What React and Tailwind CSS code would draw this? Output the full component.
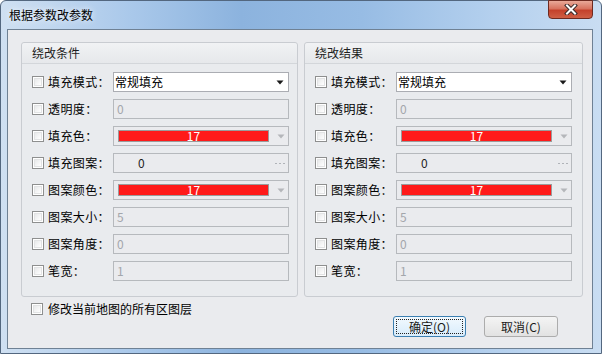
import React from 'react';

const rows = [
    { label: '填充模式：', kind: 'select' },
    { label: '透明度：', kind: 'text', value: '0' },
    { label: '填充色：', kind: 'color' },
    { label: '填充图案：', kind: 'pattern' },
    { label: '图案颜色：', kind: 'color' },
    { label: '图案大小：', kind: 'text', value: '5' },
    { label: '图案角度：', kind: 'text', value: '0' },
    { label: '笔宽：', kind: 'text', value: '1' },
];

const Checkbox = () => (
    <div className="w-[12px] h-[12px] shrink-0 border border-[#8e8f8f] bg-white p-px">
        <div className="w-full h-full border border-[#e2e3e4] bg-gradient-to-br from-[#e8e9ea] to-white" />
    </div>
);

const Arrow = ({ color }) => (
    <svg width="8" height="5" viewBox="0 0 8 5" className="shrink-0">
        <path d="M0.5 0.5 H7.5 L4 4.5 Z" fill={color} />
    </svg>
);

const Field = ({ row }) => {
    if (row.kind === 'select') {
        return (
            <div className="w-[176px] h-[20px] border border-[#abadb3] bg-white flex items-center pl-[1px] pr-[4px] justify-between">
                <span className="text-[12px] leading-none text-black">常规填充</span>
                <Arrow color="#1a1a1a" />
            </div>
        );
    }
    if (row.kind === 'color') {
        return (
            <div className="w-[176px] h-[20px] border border-[#b6b9bd] bg-[#eaebee] flex items-center pl-[4px] pr-[3px] gap-[8px]">
                <div className="w-[152px] h-[12px] border border-[#9b9b9b] bg-[#ff1a1a] flex items-center justify-center">
                    <span className="text-[12px] leading-none text-white">17</span>
                </div>
                <Arrow color="#b4b6ba" />
            </div>
        );
    }
    if (row.kind === 'pattern') {
        return (
            <div className="w-[176px] h-[20px] border border-[#b6b9bd] bg-[#eaebee] flex items-center justify-between pl-[24px] pr-[3px]">
                <span className="text-[12px] leading-none text-[#1e1e1e]">0</span>
                <div className="flex gap-[2px]">
                    <div className="w-[2px] h-[1px] bg-[#b0b3b8]" />
                    <div className="w-[2px] h-[1px] bg-[#b0b3b8]" />
                    <div className="w-[2px] h-[1px] bg-[#b0b3b8]" />
                </div>
            </div>
        );
    }
    return (
        <div className="w-[176px] h-[20px] border border-[#b6b9bd] bg-[#eaebee] flex items-center pl-[3px]">
            <span className="text-[12px] leading-none text-[#a3a6ab]">{row.value}</span>
        </div>
    );
};

const Group = ({ title, width }) => (
    <div className={`${width} h-[255px] border border-[#c9ccd1] rounded-[3px] bg-[#e9ebee]`}>
        <div className="h-[21px] border-b border-[#d3d6da] bg-gradient-to-b from-[#f1f2f4] to-[#e6e8eb] rounded-t-[3px] flex items-center pl-[10px]">
            <span className="text-[12px] leading-none text-[#1e1e1e]">{title}</span>
        </div>
        <div className="flex flex-col gap-[7px] pt-[8px] pl-[10px]">
            {rows.map((row, i) => (
                <div key={i} className="h-[20px] flex items-center">
                    <Checkbox />
                    <span className="w-[65px] ml-[4px] text-[12px] leading-none text-black whitespace-nowrap tracking-[0.4px]">{row.label}</span>
                    <Field row={row} />
                </div>
            ))}
        </div>
    </div>
);

const App = () => {
    return (
        <div className="w-[602px] h-[354px] overflow-hidden font-['Noto_Sans_CJK_SC','Liberation_Sans',sans-serif]">
            <div className="w-[602px] h-[354px] border border-[#53677f] rounded-t-[6px] bg-[linear-gradient(90deg,#cfe0f2_0%,#a9c8ea_22%,#8cb3de_40%,#97bce4_60%,#b4d0ee_82%,#c9ddf2_100%)] flex flex-col">
                {/* Title bar */}
                <div className="h-[28px] shrink-0 flex items-start justify-between pl-[8px] pr-[8px]">
                    <span className="mt-[8px] text-[12px] leading-none text-black [text-shadow:0_0_6px_#ffffff]">根据参数改参数</span>
                    <div className="w-[45px] h-[19px] -mt-px rounded-b-[4px] border border-[#6e2a20] bg-[linear-gradient(180deg,#e9a999_0%,#d7735f_45%,#c4412b_55%,#cf5f45_100%)] flex items-center justify-center">
                        <svg width="14" height="11" viewBox="0 0 14 11">
                            <path d="M3 1.5 L11 9.5 M11 1.5 L3 9.5" stroke="#3b2a2a" strokeWidth="4" strokeLinecap="square" />
                            <path d="M3 1.5 L11 9.5 M11 1.5 L3 9.5" stroke="#ffffff" strokeWidth="2" strokeLinecap="square" />
                        </svg>
                    </div>
                </div>
                {/* Client area */}
                <div className="ml-[6px] mr-[8px] h-[320px] border border-[#6f8194] bg-[#eaebee] flex flex-col">
                    <div className="flex gap-[6px] pt-[12px] pl-[13px]">
                        <Group title="绕改条件" width="w-[277px]" />
                        <Group title="绕改结果" width="w-[279px]" />
                    </div>
                    <div className="flex items-center mt-[6px] pl-[23px]">
                        <Checkbox />
                        <span className="ml-[5px] text-[12px] leading-none text-black">修改当前地图的所有区图层</span>
                    </div>
                    <div className="flex justify-end gap-[18px] pr-[34px] mt-[1px]">
                        <button className="w-[73px] h-[21px] rounded-[3px] border border-[#3c7fb1] bg-gradient-to-b from-[#f2f9fe] to-[#d8ecfb] p-[2px]">
                            <div className="w-full h-full border border-dotted border-[#222] flex items-center justify-center">
                                <span className="text-[12px] leading-none text-[#1a1a1a]">确定(O)</span>
                            </div>
                        </button>
                        <button className="w-[74px] h-[21px] rounded-[3px] border border-[#acacac] bg-gradient-to-b from-[#f4f4f4] to-[#e2e2e2] flex items-center justify-center">
                            <span className="text-[12px] leading-none text-[#1a1a1a]">取消(C)</span>
                        </button>
                    </div>
                </div>
            </div>
        </div>
    );
};

export default App;
